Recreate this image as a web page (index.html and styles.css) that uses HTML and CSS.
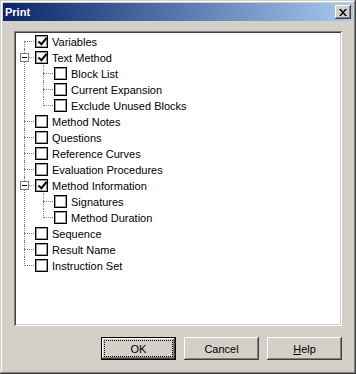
FILE: index.html
```html
<!DOCTYPE html>
<html lang="en">
<head>
    <meta charset="UTF-8">
    <title>Print</title>
    <link rel="stylesheet" href="styles.css">
</head>
<body>

<div class="window">
    <div class="titlebar">
        <span class="title">Print</span>
        <button class="close" type="button">
            <svg width="8" height="7" viewBox="0 0 8 7"><path d="M0 0h2l2 2.5L6 0h2L5 3.5 8 7H6L4 4.5 2 7H0l3-3.5z" fill="#000"/></svg>
        </button>
    </div>

    <div class="client">
        <div class="treebox">
            <ul class="tree">
                <li><span class="row"><span class="box checked"></span><span class="label">Variables</span></span></li>
                <li>
                    <span class="toggle"></span>
                    <span class="row"><span class="box checked"></span><span class="label">Text Method</span></span>
                    <ul>
                        <li><span class="row"><span class="box"></span><span class="label">Block List</span></span></li>
                        <li><span class="row"><span class="box"></span><span class="label">Current Expansion</span></span></li>
                        <li><span class="row"><span class="box"></span><span class="label">Exclude Unused Blocks</span></span></li>
                    </ul>
                </li>
                <li><span class="row"><span class="box"></span><span class="label">Method Notes</span></span></li>
                <li><span class="row"><span class="box"></span><span class="label">Questions</span></span></li>
                <li><span class="row"><span class="box"></span><span class="label">Reference Curves</span></span></li>
                <li><span class="row"><span class="box"></span><span class="label">Evaluation Procedures</span></span></li>
                <li>
                    <span class="toggle"></span>
                    <span class="row"><span class="box checked"></span><span class="label">Method Information</span></span>
                    <ul>
                        <li><span class="row"><span class="box"></span><span class="label">Signatures</span></span></li>
                        <li><span class="row"><span class="box"></span><span class="label">Method Duration</span></span></li>
                    </ul>
                </li>
                <li><span class="row"><span class="box"></span><span class="label">Sequence</span></span></li>
                <li><span class="row"><span class="box"></span><span class="label">Result Name</span></span></li>
                <li><span class="row"><span class="box"></span><span class="label">Instruction Set</span></span></li>
            </ul>
        </div>

        <div class="buttons">
            <button class="btn default" type="button"><span class="focus">OK</span></button>
            <button class="btn" type="button"><span>Cancel</span></button>
            <button class="btn" type="button"><span><u>H</u>elp</span></button>
        </div>
    </div>
</div>

</body>
</html>
```

FILE: styles.css
```css
body {
    margin: 0;
    background-color: #d4d0c8;
    font-family: 'Liberation Sans', Arial, sans-serif;
    font-size: 11px;
    color: #000;
}

.window {
    width: 356px;
    height: 374px;
    box-sizing: border-box;
    padding: 3px;
    display: flex;
    flex-direction: column;
    background-color: #d4d0c8;
    box-shadow: inset -1px -1px #404040, inset 1px 1px #d4d0c8,
                inset -2px -2px #808080, inset 2px 2px #fff;
}

.titlebar {
    height: 18px;
    flex: none;
    display: flex;
    align-items: center;
    justify-content: space-between;
    padding: 0 2px 0 2px;
    background: linear-gradient(to right, #0a246a, #a6caf0);
}

.title {
    color: #fff;
    font-weight: bold;
    font-size: 11px;
}

.close {
    width: 16px;
    height: 14px;
    padding: 0;
    border: none;
    display: flex;
    align-items: center;
    justify-content: center;
    background-color: #d4d0c8;
    box-shadow: inset -1px -1px #404040, inset 1px 1px #fff,
                inset -2px -2px #808080, inset 2px 2px #d4d0c8;
}

.client {
    flex: 1;
    display: flex;
    flex-direction: column;
    gap: 11px;
    padding: 10px 11px 11px 11px;
}

.treebox {
    flex: 1;
    padding: 2px;
    background-color: #fff;
    box-shadow: inset 1px 1px #808080, inset -1px -1px #fff,
                inset 2px 2px #404040, inset -2px -2px #d4d0c8;
}

/* tree */
.tree,
.tree ul {
    list-style: none;
    margin: 0;
    padding: 0 0 0 19px;
}

.tree li {
    position: relative;
}

/* horizontal connector */
.tree li::before {
    content: '';
    position: absolute;
    left: -11px;
    top: 8px;
    width: 10px;
    border-top: 1px dotted #808080;
}

/* vertical connector */
.tree li::after {
    content: '';
    position: absolute;
    left: -11px;
    top: 0;
    bottom: 0;
    border-left: 1px dotted #808080;
}

.tree > li:first-child::after {
    top: 8px;
}

.tree li:last-child::after {
    bottom: auto;
    height: 9px;
}

.toggle {
    position: absolute;
    left: -15px;
    top: 4px;
    width: 9px;
    height: 9px;
    box-sizing: border-box;
    border: 1px solid #808080;
    background-color: #fff;
    z-index: 1;
}

.toggle::after {
    content: '';
    position: absolute;
    left: 1px;
    top: 3px;
    width: 5px;
    height: 1px;
    background-color: #000;
}

.row {
    display: flex;
    align-items: flex-start;
    height: 16px;
}

.box {
    width: 13px;
    height: 13px;
    box-sizing: border-box;
    margin-top: 2px;
    border: 1px solid #000;
    box-shadow: inset 0 0 0 1px #9a9a9a;
    background-color: #fff;
    flex: none;
    position: relative;
}

.box.checked::after {
    content: '';
    position: absolute;
    left: 4px;
    top: 0;
    width: 3px;
    height: 7px;
    border: solid #000;
    border-width: 0 2px 2px 0;
    transform: rotate(40deg);
}

.label {
    margin-left: 4px;
    line-height: 18px;
    white-space: nowrap;
}

/* buttons */
.buttons {
    display: flex;
    justify-content: flex-end;
    gap: 8px;
    height: 23px;
    flex: none;
}

.btn {
    width: 75px;
    height: 23px;
    padding: 0;
    border: none;
    font-family: 'Liberation Sans', Arial, sans-serif;
    font-size: 11px;
    color: #000;
    background-color: #d4d0c8;
    box-shadow: inset -1px -1px #404040, inset 1px 1px #fff,
                inset -2px -2px #808080, inset 2px 2px #d4d0c8;
    display: flex;
    align-items: center;
    justify-content: center;
}

.btn.default {
    border: 1px solid #000;
}

.btn.default .focus {
    flex: 1;
    align-self: stretch;
    margin: 3px;
    display: flex;
    align-items: center;
    justify-content: center;
    outline: 1px dotted #000;
}
```
